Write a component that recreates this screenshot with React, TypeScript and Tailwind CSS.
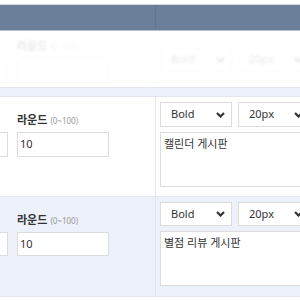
import React from "react";

const font = { fontFamily: '"Noto Sans", "Noto Sans CJK KR", sans-serif' };

const Chevron: React.FC = () => (
  <svg width="9" height="6" viewBox="0 0 9 6" className="shrink-0">
    <path d="M1 1l3.5 3.5L8 1" fill="none" stroke="#333" strokeWidth="2.2" />
  </svg>
);

const Select: React.FC<{ value: string; h: string }> = ({ value, h }) => (
  <div
    className={`w-[72px] ${h} shrink-0 border border-[#dcdcdc] bg-white flex items-center justify-between pl-[10px] pr-[6px] text-[11px] text-[#333]`}
  >
    <span>{value}</span>
    <Chevron />
  </div>
);

const Round: React.FC<{ value?: string; h: string }> = ({ value, h }) => (
  <div className="flex gap-[9px]">
    <div className={`w-[91px] -ml-[83px] mt-[18px] ${h} border border-[#dcdcdc] bg-white`} />
    <div className="flex flex-col">
      <div className="flex items-baseline gap-[3px] h-[12px] leading-[12px]">
        <span className="text-[11px] font-bold text-[#333]">라운드</span>
        <span className="text-[8px] text-[#999]">(0~100)</span>
      </div>
      <div
        className={`w-[92px] ${h} mt-[6px] border border-[#dcdcdc] bg-white flex items-center px-[2px] text-[11px] text-[#333]`}
      >
        {value}
      </div>
    </div>
  </div>
);

const Row: React.FC<{ bg: string; text: string; h: string }> = ({ bg, text, h }) => (
  <div className={`flex ${bg} border-b border-[#e2e6ee] h-[100px]`}>
    <div className="w-[156px] shrink-0 border-r border-[#e2e6ee] pt-[17px]">
      <Round value="10" h={h} />
    </div>
    <div className="flex-1 pl-[4px] pt-[5px] flex flex-col gap-[5px]">
      <div className="flex gap-[6px]">
        <Select value="Bold" h={h} />
        <Select value="20px" h={h} />
      </div>
      <div className="h-[55px] w-[160px] border border-[#dcdcdc] bg-white px-[3px] py-[4px] text-[11px] text-[#333] leading-[14px]">
        {text}
      </div>
    </div>
  </div>
);

export default function App() {
  return (
    <div className="w-[300px] h-[300px] overflow-hidden bg-white" style={font}>
      <div className="h-[4px] bg-white" />
      <div className="flex h-[27px] bg-[#6b7f99] border-t border-[#d4d8de] border-b border-b-[#b3bfcf]">
        <div className="w-[156px] shrink-0 border-r border-[#63768f]" />
        <div className="flex-1" />
      </div>
      <div className="flex h-[56px] bg-white">
        <div className="w-[156px] shrink-0 border-r border-[#e2e6ee] pt-[9px] opacity-10 blur-[1px]">
          <Round h="h-[25px]" />
        </div>
        <div className="flex-1 pl-[4px] pt-[16px] flex gap-[6px] opacity-10 blur-[1px]">
          <Select value="Bold" h="h-[25px]" />
          <Select value="20px" h="h-[25px]" />
        </div>
      </div>
      <div className="h-[10px] bg-[#edf1f9] border-y border-[#e2e6ee]" />
      <Row bg="bg-white" text="캘린더 게시판" h="h-[25px]" />
      <Row bg="bg-[#edf1f9]" text="별점 리뷰 게시판" h="h-[24px]" />
    </div>
  );
}
